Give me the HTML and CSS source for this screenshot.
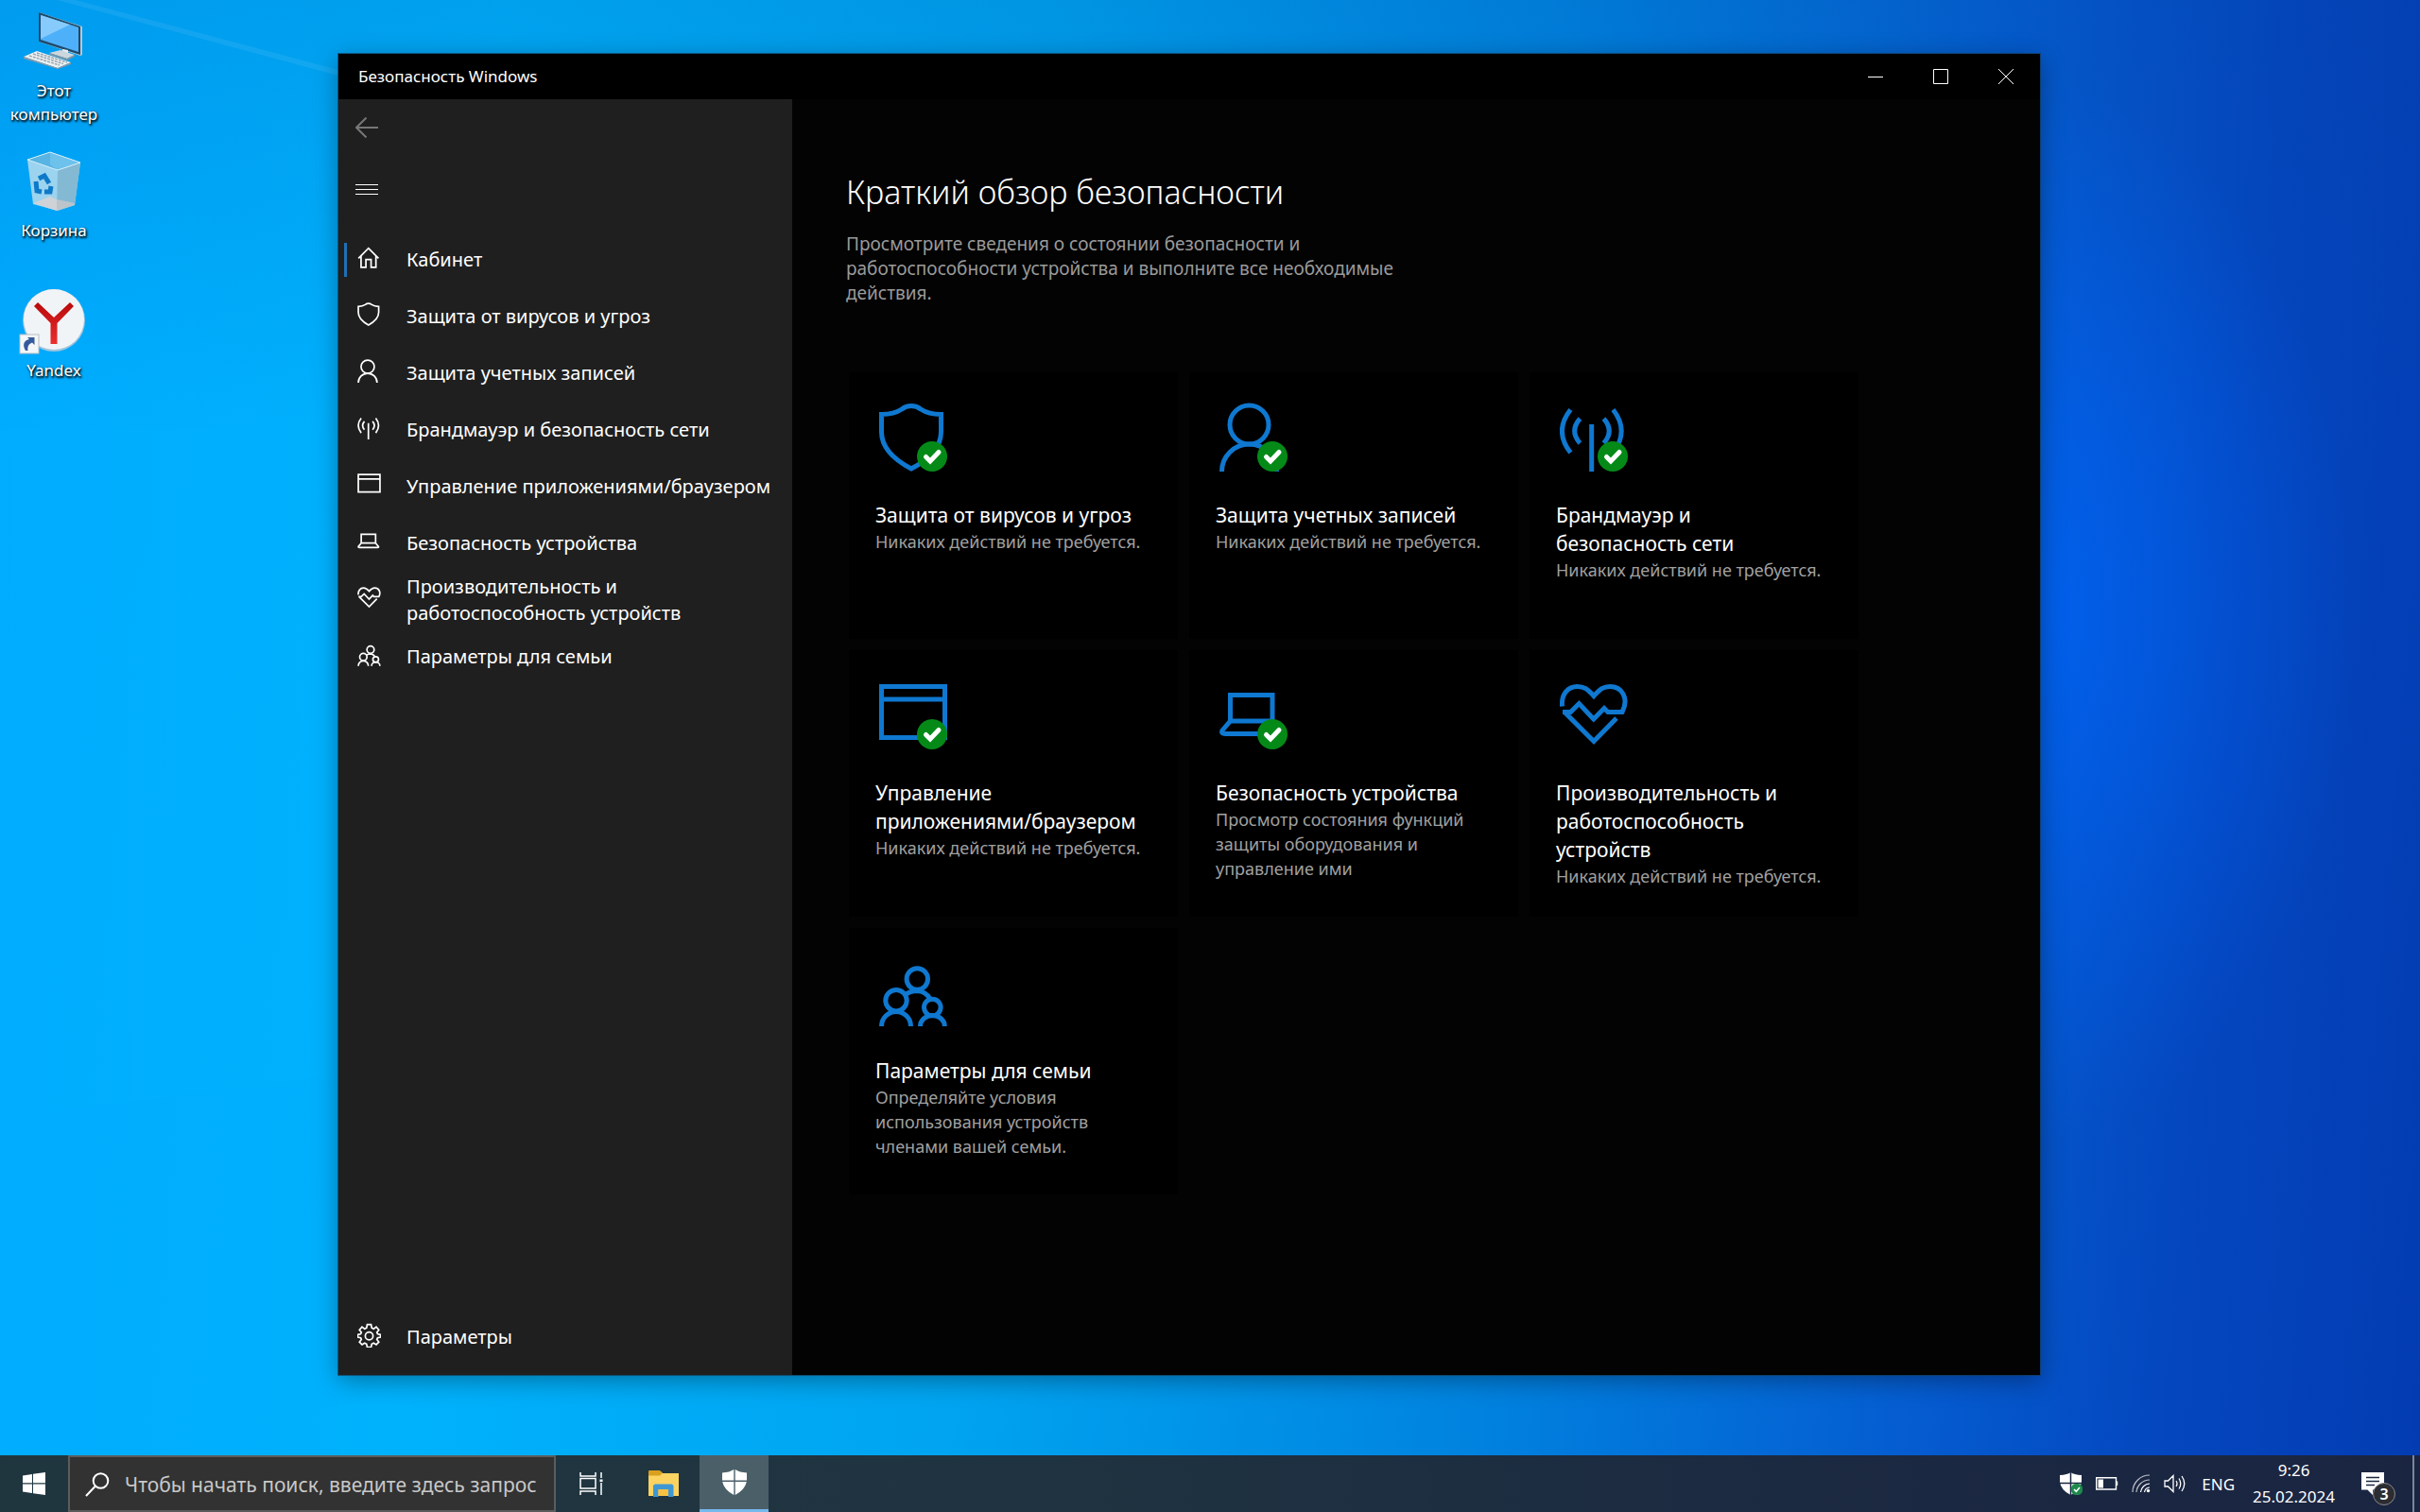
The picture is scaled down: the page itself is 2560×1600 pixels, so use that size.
FILE: index.html
```html
<!DOCTYPE html>
<html lang="ru">
<head>
  <meta charset="UTF-8" />
  <title>Безопасность Windows</title>
  <meta name="viewport" content="width=device-width, initial-scale=1.0" />
  <link rel="stylesheet" href="styles.css">
</head>
<body>

  <!-- Shared icons -->
  <svg class="sprite" aria-hidden="true">
    <symbol id="i-home" viewBox="0 0 72 76">
      <path d="M3 39 L34 8 L65 39 M11 32 V67 H26 V43 H42 V67 H57 V32" />
    </symbol>
    <symbol id="i-shield" viewBox="0 0 72 76">
      <path d="M34 3.5 C30 3.5 27 4.5 24 7 C18 11 12 12.5 2.5 12.5 V31 C2.5 48 15 60 34 70 C53 60 65.5 48 65.5 31 V12.5 C56 12.5 50 11 44 7 C41 4.5 38 3.5 34 3.5Z" />
    </symbol>
    <symbol id="i-user" viewBox="0 0 72 76">
      <circle cx="31.5" cy="23.5" r="20.5" />
      <path d="M2.5 73 A29 29 0 0 1 60.5 73" />
    </symbol>
    <symbol id="i-network" viewBox="0 0 72 76">
      <path d="M33.7 23 V73 M11.4 7.5 Q-6.5 30 11.4 53 M21.4 17 Q10 30 21.4 43 M46.5 17 Q58 30 46.5 43 M56.4 7.5 Q74 30 56.4 53" />
    </symbol>
    <symbol id="i-app" viewBox="0 0 72 76">
      <path d="M2.5 6.5 H69.5 V60.5 H2.5Z M2.5 20 H69.5" />
    </symbol>
    <symbol id="i-device" viewBox="0 0 72 76">
      <path d="M11.5 15.5 H56 V43 H11.5Z M11.5 43 L3 53 Q1.5 56.5 6 56.5 H62 Q66.5 56.5 64.5 53 L56 43" />
    </symbol>
    <symbol id="i-health" viewBox="0 0 72 76">
      <path d="M2.5 27.5 C1.5 14 9 6.5 18.6 6.5 C26 6.5 29 9 36 16.5 C43 9 46 6.5 53 6.5 C66 6.5 73.5 19 66 33.5 H51 L47 29.5 L35.8 41 L20.4 24.5 L11.5 33.5 H3 M6 34.5 L36 64.5 L60 40" />
    </symbol>
    <symbol id="i-family" viewBox="0 0 72 76">
      <circle cx="40.3" cy="22" r="11.2" />
      <circle cx="18" cy="44.7" r="11.2" />
      <circle cx="56.3" cy="52" r="8.8" />
      <path d="M2.5 72 A15.5 15.5 0 0 1 33.5 72 M43.5 72 A12.9 11.5 0 0 1 69.3 72 M27 39 Q33 34.5 40.3 34.5 Q49 35 54 43" />
    </symbol>
    <symbol id="i-gear" viewBox="0 0 72 76">
      <path d="M30 5 H42 L44 15 L50 18 L58 12 L66 21 L60 29 L62 34 L71 36 V44 L62 46 L60 51 L66 59 L58 67 L50 62 L44 65 L42 75 H30 L28 65 L22 62 L14 67 L6 59 L12 51 L10 46 L1 44 V36 L10 34 L12 29 L6 21 L14 12 L22 18 L28 15Z" />
      <circle cx="36" cy="40" r="12" />
    </symbol>
    <symbol id="i-check" viewBox="0 0 34 34">
      <circle cx="17" cy="17" r="16" fill="#058a18" stroke="none" />
      <path d="M10.5 17.5 L15 22 L24 12.5" fill="none" stroke="#fff" stroke-width="5" stroke-linecap="round" />
    </symbol>
  </svg>

  <main class="desktop">
    <svg class="rays" viewBox="0 0 2560 1540" preserveAspectRatio="none" aria-hidden="true">
      <path d="M80 0 L358 74 V80 L60 0Z" fill="#fff" opacity=".07" />
      <path d="M0 1184 L358 1138 V1540 H0Z" fill="#0af" opacity=".12" />
    </svg>

    <div class="shortcuts">
      <a href="#" class="shortcut">
        <svg width="64" height="64" viewBox="0 0 64 64">
          <path d="M16 1 L62 16 L62 46 L60 47 L16 32Z" fill="#b9c6cf" />
          <path d="M16 1 L60 16 V46 L16 32Z" fill="#1e4a6b" />
          <path d="M18 4 L58 17 V43 L18 30Z" fill="#4fb0fa" />
          <path d="M18 4 L49 14 L18 29Z" fill="#86cbfb" />
          <path d="M41 40 L47 41 V46 L41 45Z" fill="#e8edf0" />
          <path d="M27 44 L39 41 L54 46 L46 50Z" fill="#cdd6dc" />
          <path d="M27 44 L46 50 L54 46 V48 L46 52 L27 46Z" fill="#7f95a3" />
          <path d="M0 48 L14 42 L50 54 L36 60Z" fill="#edf1f3" />
          <path d="M0 48 L36 60 L50 54 V56 L36 61 L0 50Z" fill="#8c9ba5" />
          <path d="M6 47 L38 57 M10 45 L42 55.5 M14 44 L46 54" stroke="#9aa7af" stroke-width="1.5" stroke-dasharray="3 1" />
        </svg>
        <span>Этот компьютер</span>
      </a>
      <a href="#" class="shortcut">
        <svg width="64" height="64" viewBox="0 0 64 64">
          <path d="M4 9 L28 1 L60 12 L54 57 L36 63 L10 56Z" fill="#9cd3ee" />
          <path d="M4 9 L28 1 L60 12 L36 20Z" fill="#58b4e2" />
          <path d="M28 1 L60 12 L36 20 L28 14Z" fill="#6dc2ec" />
          <path d="M36 20 L60 12 L54 57 L35 63Z" fill="#84b9d4" />
          <path d="M10 55 L28 48 L35 51 V63Z" fill="#cfd3d8" />
          <path d="M35 51 L54 55 V57 L35 63Z" fill="#bcc4cb" />
          <path d="M4 9 L28 1 L60 12 L36 20Z" fill="none" stroke="#d4f0fc" />
          <g fill="none" stroke="#0d7ac9" stroke-width="5">
            <path d="M16 29 L22 26 L27 34" />
            <path d="M13 32 L14 42 L19 43" />
            <path d="M22 43 L28 43 L29 37" />
          </g>
        </svg>
        <span>Корзина</span>
      </a>
      <a href="#" class="shortcut">
        <svg width="72" height="64" viewBox="0 3 72 64">
          <defs>
            <linearGradient id="ya" x1="0" y1="0" x2="0" y2="1">
              <stop offset="0" stop-color="#b80a0a" />
              <stop offset="1" stop-color="#ec2f2f" />
            </linearGradient>
          </defs>
          <circle cx="36" cy="34" r="33" fill="#9fc4de" />
          <circle cx="36" cy="33" r="32" fill="#f1f4f6" />
          <path d="M15 19 L19 15 L36 31 L53 15 L57 19 L39.5 37 V59 H32.5 V37Z" fill="url(#ya)" />
          <rect x="0" y="49" width="20" height="20" fill="#f4f6f8" stroke="#b8bec4" />
          <path d="M6 66 C2 59 5 55 10 54 L8 52 H15.5 V60 L13 57.5 C9 59 8 62 8.5 66Z" fill="#345a9c" />
        </svg>
        <span>Yandex</span>
      </a>
    </div>

    <section class="window">
      <header class="titlebar">
        <span class="title">Безопасность Windows</span>
        <button type="button" aria-label="Свернуть"><svg width="16" height="16" viewBox="0 0 16 16"><path d="M0 8.5 H16" /></svg></button>
        <button type="button" aria-label="Развернуть"><svg width="16" height="16" viewBox="0 0 16 16"><path d="M.5 .5 H15.5 V15.5 H.5Z" /></svg></button>
        <button type="button" aria-label="Закрыть"><svg width="16" height="16" viewBox="0 0 16 16"><path d="M0 0 L16 16 M16 0 L0 16" /></svg></button>
      </header>

      <div class="window-body">
        <aside class="sidebar">
          <button type="button" class="back" aria-label="Назад"><svg width="24" height="22" viewBox="0 0 24 22"><path d="M24 11 H1 M11.5 .5 L1 11 L11.5 21.5" /></svg></button>
          <button type="button" class="burger" aria-label="Меню"><svg width="24" height="12" viewBox="0 0 24 12"><path d="M0 1.5 H24 M0 6.5 H24 M0 11.5 H24" /></svg></button>

          <nav class="nav">
            <a href="#" class="active"><svg><use href="#i-home" /></svg><span>Кабинет</span></a>
            <a href="#"><svg><use href="#i-shield" /></svg><span>Защита от вирусов и угроз</span></a>
            <a href="#"><svg><use href="#i-user" /></svg><span>Защита учетных записей</span></a>
            <a href="#"><svg><use href="#i-network" /></svg><span>Брандмауэр и безопасность сети</span></a>
            <a href="#"><svg><use href="#i-app" /></svg><span>Управление приложениями/браузером</span></a>
            <a href="#"><svg><use href="#i-device" /></svg><span>Безопасность устройства</span></a>
            <a href="#"><svg><use href="#i-health" /></svg><span>Производительность и<br>работоспособность устройств</span></a>
            <a href="#"><svg><use href="#i-family" /></svg><span>Параметры для семьи</span></a>
            <a href="#" class="settings"><svg><use href="#i-gear" /></svg><span>Параметры</span></a>
          </nav>
        </aside>

        <div class="content">
          <h1>Краткий обзор безопасности</h1>
          <p class="lead">Просмотрите сведения о состоянии безопасности и работоспособности устройства и выполните все необходимые действия.</p>

          <div class="cards">
            <a href="#" class="card">
              <div class="card-icon"><svg><use href="#i-shield" /></svg><svg class="check"><use href="#i-check" /></svg></div>
              <h2>Защита от вирусов и угроз</h2>
              <p>Никаких действий не требуется.</p>
            </a>
            <a href="#" class="card">
              <div class="card-icon"><svg><use href="#i-user" /></svg><svg class="check"><use href="#i-check" /></svg></div>
              <h2>Защита учетных записей</h2>
              <p>Никаких действий не требуется.</p>
            </a>
            <a href="#" class="card">
              <div class="card-icon"><svg><use href="#i-network" /></svg><svg class="check"><use href="#i-check" /></svg></div>
              <h2>Брандмауэр и<br>безопасность сети</h2>
              <p>Никаких действий не требуется.</p>
            </a>
            <a href="#" class="card">
              <div class="card-icon"><svg><use href="#i-app" /></svg><svg class="check"><use href="#i-check" /></svg></div>
              <h2>Управление<br>приложениями/браузером</h2>
              <p>Никаких действий не требуется.</p>
            </a>
            <a href="#" class="card">
              <div class="card-icon"><svg><use href="#i-device" /></svg><svg class="check"><use href="#i-check" /></svg></div>
              <h2>Безопасность устройства</h2>
              <p>Просмотр состояния функций защиты оборудования и управление ими</p>
            </a>
            <a href="#" class="card">
              <div class="card-icon"><svg><use href="#i-health" /></svg></div>
              <h2>Производительность и работоспособность устройств</h2>
              <p>Никаких действий не требуется.</p>
            </a>
            <a href="#" class="card">
              <div class="card-icon"><svg><use href="#i-family" /></svg></div>
              <h2>Параметры для семьи</h2>
              <p>Определяйте условия<br>использования устройств членами вашей семьи.</p>
            </a>
          </div>
        </div>
      </div>
    </section>
  </main>

  <footer class="taskbar">
    <button type="button" class="start" aria-label="Пуск">
      <svg width="24" height="24" viewBox="0 0 24 24"><path d="M0 3.4 L10 2 V11.3 H0Z M11 1.8 L24 0 V11.3 H11Z M0 12.5 H10 V22 L0 20.6Z M11 12.5 H24 V24 L11 22.2Z" fill="#fff" /></svg>
    </button>
    <label class="search">
      <svg width="26" height="26" viewBox="0 0 26 26"><circle cx="16.5" cy="9" r="7.8" /><path d="M11 14.5 L1 25" /></svg>
      <input type="text" aria-label="Поиск" placeholder="Чтобы начать поиск, введите здесь запрос">
    </label>
    <button type="button" class="task" aria-label="Представление задач">
      <svg width="26" height="24" viewBox="0 0 26 24" fill="none" stroke="#fff" stroke-width="1.5"><path d="M1 0 V4 H17 V0 M1 6.5 H17 V17 H1Z M1 24 V20 H17 V24 M23 0 V6 M23 11 V24" /><path d="M21.5 7.5 H24.5 V10 H21.5Z" fill="#fff" stroke="none" /></svg>
    </button>
    <button type="button" class="task" aria-label="Проводник">
      <svg width="32" height="28" viewBox="0 0 32 28"><path d="M0 1 H13 L15 3 H32 V27 H0Z" fill="#fdd462" /><path d="M0 1 Q0 0 1 0 H12 L14.5 3 L12 5.5 H0Z" fill="#d9a01e" /><path d="M5 28 V17 Q5 14.5 7.5 14.5 H24 Q26.5 14.5 26.5 17 V28 H21 V20 H10.500 V28Z" fill="#3f97d3" /><path d="M10.5 20 H21 V27 H10.5Z" fill="#f8c142" /></svg>
    </button>
    <button type="button" class="task current" aria-label="Безопасность Windows">
      <svg width="26" height="27" viewBox="0 0 26 27" fill="#fff"><path d="M12.3 0 Q8 3 0 3.5 V11.5 H12.3Z M13.7 0 Q18 3 26 3.5 V11.5 H13.7Z M0.2 13 H12.3 V27 Q2 21.5 .2 13Z M13.7 13 H25.8 Q24 21.5 13.7 27Z" /></svg>
    </button>

    <div class="tray">
      <svg width="24" height="24" viewBox="0 0 24 24"><path d="M11.5 0 Q8 2.5 0 3 V10 Q1 19 11.5 24 Q22 19 23 10 V3 Q15 2.5 11.5 0Z" fill="#fff" /><path d="M11.5 0 V24 M0 11.5 H23" stroke="#1b2841" stroke-width="1.5" /><circle cx="18" cy="18" r="6.3" fill="#1d8a4c" /><path d="M15 18 L17.3 20.3 L21 16" fill="none" stroke="#fff" stroke-width="1.5" /></svg>
      <svg width="24" height="14" viewBox="0 0 24 14"><path d="M.7 .7 H21.5 V13 H.7Z M22.5 4.5 V9" fill="none" stroke="#fff" stroke-width="1.4" /><path d="M2.5 2.5 H8 V11.5 H2.5Z" fill="#fff" /></svg>
      <svg width="20" height="20" viewBox="0 0 20 20"><g fill="none" stroke="#fff" stroke-width="1.2"><path d="M1 19 A18 18 0 0 1 19 1" opacity=".7" /><path d="M5 19 A14 14 0 0 1 19 6" opacity=".7" /><path d="M9.5 19 A10 10 0 0 1 19 10" /><path d="M13.5 19 A6 6 0 0 1 19 14" /></g><circle cx="17.5" cy="17.5" r="1.7" fill="#fff" /></svg>
      <svg width="24" height="20" viewBox="0 0 24 20" fill="none" stroke="#fff" stroke-width="1.3"><path d="M1 7 H4.5 L10 1.5 V18.5 L4.5 13 H1Z M13 7 Q15 10 13 13 M16 4.5 Q19.5 10 16 15.5 M19 2 Q24.5 10 19 18" /></svg>
      <span class="lang">ENG</span>
      <div class="clock"><span>9:26</span><span>25.02.2024</span></div>
      <button type="button" class="notify" aria-label="Уведомления">
        <svg width="24" height="24" viewBox="0 0 24 24"><path d="M0 0 H24 V18.5 H12 V24 L6.5 18.5 H0Z" fill="#fff" /><path d="M5 5.5 H19 M5 9.5 H19 M5 13.5 H14" stroke="#1b2841" stroke-width="1.4" /></svg>
        <span class="badge">3</span>
      </button>
    </div>
  </footer>
</body>
</html>
```

FILE: styles.css
```css
html, body {
  margin: 0;
  padding: 0;
  height: 100%;
  font-family: "Noto Sans", "Open Sans", sans-serif;
  overflow: hidden;
}

* {
  box-sizing: border-box;
}

body {
  display: flex;
  flex-direction: column;
  color: #fff;
  background: #00a2fa;
}

a {
  color: inherit;
  text-decoration: none;
}

button {
  display: flex;
  align-items: center;
  justify-content: center;
  padding: 0;
  border: none;
  background: none;
  color: inherit;
  font: inherit;
}

.sprite {
  position: absolute;
  width: 0;
  height: 0;
}

/* Desktop */
.desktop {
  flex: 1;
  position: relative;
  background:
    radial-gradient(ellipse 340px 560px at 84% 42%, rgba(0, 100, 250, 0.7), rgba(0, 100, 250, 0) 100%),
    linear-gradient(to bottom, rgba(0, 60, 150, 0.15), rgba(0, 60, 150, 0) 30%),
    linear-gradient(95deg, #00acff 0%, #00b2fc 20%, #00a4f0 42%, #0084e0 62%, #055cd0 80%, #0446be 90%, #033cb2 100%);
}

.rays {
  position: absolute;
  inset: 0;
  width: 100%;
  height: 100%;
}

.shortcuts {
  position: relative;
  width: 114px;
  padding-top: 12px;
  display: flex;
  flex-direction: column;
}

.shortcut {
  height: 148px;
  display: flex;
  flex-direction: column;
  align-items: center;
  gap: 7px;
  font-size: 17px;
  line-height: 25px;
  text-align: center;
  text-shadow: 1px 1px 3px #000, 1px 2px 2px rgba(0, 0, 0, 0.8);
}

.shortcut svg {
  flex: none;
  overflow: visible;
}

/* Window */
.window {
  position: absolute;
  inset: 57px 402px 85px 358px;
  display: flex;
  flex-direction: column;
  background: #030303;
  box-shadow: 0 0 0 1px rgba(20, 60, 90, 0.7), 0 6px 24px rgba(0, 0, 0, 0.35);
}

.titlebar {
  display: flex;
  height: 48px;
  padding-right: 2px;
  background: #000;
  font-size: 17px;
}

.titlebar .title {
  flex: 1;
  padding-left: 21px;
  line-height: 48px;
}

.titlebar button {
  width: 69px;
}

.titlebar svg, .back svg, .burger svg, .search svg {
  fill: none;
  stroke: #fff;
}

.window-body {
  flex: 1;
  display: flex;
}

.sidebar {
  width: 480px;
  display: flex;
  flex-direction: column;
  padding-bottom: 10px;
  background: #1f1f1f;
}

.back, .burger {
  width: 60px;
  height: 60px;
}

.back svg {
  stroke: #777;
  stroke-width: 2;
}

.burger {
  height: 70px;
  margin-bottom: 10px;
}

.nav {
  flex: 1;
  display: flex;
  flex-direction: column;
}

.nav a {
  display: flex;
  align-items: center;
  height: 60px;
  padding-left: 20px;
  gap: 27px;
  font-size: 20px;
  line-height: 28px;
  white-space: nowrap;
}

.nav svg {
  flex: none;
  width: 25px;
  height: 26px;
  margin-bottom: 4px;
  fill: none;
  stroke: #fff;
  stroke-width: 5;
}

.nav .active {
  padding-left: 6px;
  gap: 0;
}

.nav .active::before {
  content: "";
  width: 3px;
  height: 36px;
  margin-right: 11px;
  background: #1f6fb5;
}

.nav .active span {
  margin-left: 27px;
}

.nav .settings {
  margin-top: auto;
}

.content {
  flex: 1;
  padding: 72px 60px 0 57px;
}

h1, h2, p {
  margin: 0;
  font-weight: 400;
}

h1 {
  font-size: 34px;
  font-weight: 300;
  line-height: 52px;
}

.lead {
  max-width: 600px;
  margin-top: 16px;
  font-size: 19px;
  line-height: 26px;
  color: #9a9a9a;
}

.cards {
  display: grid;
  grid-template-columns: repeat(3, 1fr);
  grid-auto-rows: 282px;
  gap: 12px;
  max-width: 1068px;
  margin: 71px 0 0 3px;
}

.card {
  padding: 32px 28px 0;
  background: #000;
}

.card-icon {
  position: relative;
  width: 76px;
  height: 76px;
  margin: 0 0 28px 4px;
}

.card-icon svg {
  display: block;
  width: 72px;
  height: 76px;
  fill: none;
  stroke: #0f78d0;
  stroke-width: 5;
}

.card-icon .check {
  position: absolute;
  left: 39px;
  top: 40px;
  width: 34px;
  height: 34px;
}

.card h2 {
  font-size: 21px;
  line-height: 30px;
}

.card p {
  font-size: 18px;
  line-height: 26px;
  color: #a0a0a0;
}

/* Taskbar */
.taskbar {
  display: flex;
  height: 60px;
  background: linear-gradient(to right, #20363f, #1f3440 40%, #1b2841 80%, #1a2542);
}

.start {
  width: 72px;
}

.search {
  display: flex;
  align-items: center;
  width: 516px;
  padding: 2px 6px 0 16px;
  gap: 16px;
  border: 2px solid #5c5c5c;
  background: #323232;
}

.search svg {
  flex: none;
  stroke-width: 2;
}

.search input {
  flex: 1;
  min-width: 0;
  padding: 0;
  border: none;
  outline: none;
  background: none;
  color: #fff;
  font: inherit;
  font-size: 21px;
}

.search input::placeholder {
  color: #c8c8c8;
  opacity: 1;
}

.task {
  width: 76px;
}

.task.current {
  width: 73px;
  background: #4b5f69;
  border-bottom: 3px solid #76b9ed;
}

.tray {
  display: flex;
  align-items: center;
  gap: 14px;
  margin-left: auto;
  font-size: 17px;
}

.lang {
  margin: 0 5px 0 2px;
}

.clock {
  display: flex;
  flex-direction: column;
  align-items: center;
  line-height: 28px;
}

.notify {
  position: relative;
  justify-content: flex-start;
  height: 60px;
  width: 70px;
  padding-left: 14px;
  border-right: 2px solid #7c8699;
  margin-right: 6px;
}

.badge {
  position: absolute;
  left: 26px;
  top: 29px;
  width: 24px;
  height: 24px;
  border: 1px solid #8a8a8a;
  border-radius: 50%;
  background: #2b2d33;
  font-size: 16px;
  font-weight: 600;
  line-height: 22px;
}
```
